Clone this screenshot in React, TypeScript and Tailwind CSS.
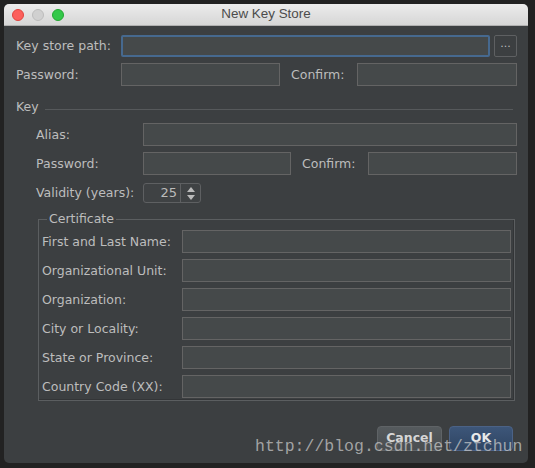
import React from 'react'

const labelCls = 'shrink-0 text-[12.5px] leading-[16px] text-[#bdbdbd]'
const fieldCls = 'h-[23px] border border-[#646464] bg-[#45494a]'

function Field({ className = '' }: { className?: string }) {
  return <div className={`${fieldCls} ${className}`} />
}

function Row({ children, className = '' }: { children: React.ReactNode; className?: string }) {
  return <div className={`flex items-center ${className}`}>{children}</div>
}

const certRows = [
  'First and Last Name:',
  'Organizational Unit:',
  'Organization:',
  'City or Locality:',
  'State or Province:',
  'Country Code (XX):',
]

export default function App() {
  return (
    <div
      className="relative h-[468px] w-[535px] overflow-hidden bg-[#222222] p-[4px] pr-[7px] pb-[5px]"
      style={{ fontFamily: '"DejaVu Sans", "Liberation Sans", sans-serif' }}
    >
      <div className="flex h-full flex-col overflow-hidden rounded-[5px] bg-[#3c3f41]">
        {/* title bar */}
        <div className="relative flex h-[22px] shrink-0 items-center border-b border-[#b0b0b0] bg-gradient-to-b from-[#ececec] to-[#d6d6d6] pl-[8px]">
          <div className="flex gap-[8px]">
            <span className="h-[12px] w-[12px] rounded-full border border-[#e0443e] bg-[#fc605c]" />
            <span className="h-[12px] w-[12px] rounded-full border border-[#bcbcbc] bg-[#d0d0d0]" />
            <span className="h-[12px] w-[12px] rounded-full border border-[#24a732] bg-[#34c84a]" />
          </div>
          <div
            className="absolute inset-0 flex items-center justify-center text-[13.4px] text-[#4c4c4c]"
            style={{ fontFamily: '"Liberation Sans", Arial, sans-serif' }}
          >
            New Key Store
          </div>
        </div>

        <div className="flex flex-1 flex-col pl-[12px] pr-[11px]">
          <Row className="mt-[9px]">
            <span className={`${labelCls} w-[105px]`}>Key store path:</span>
            <div className="h-[22px] flex-1 rounded-[2px] border-2 border-[#46698f] bg-[#45494a]" />
            <div className="ml-[4px] flex h-[22px] w-[23px] items-center justify-center rounded-[2px] border border-[#5e6062] pb-[4px] text-[11px] text-[#bbbbbb]">
              ...
            </div>
          </Row>
          <Row className="mt-[6px]">
            <span className={`${labelCls} w-[105px]`}>Password:</span>
            <Field className="w-[159px]" />
            <span className={`${labelCls} ml-[11px] w-[66px]`}>Confirm:</span>
            <Field className="flex-1" />
          </Row>

          {/* Key section */}
          <div className="mt-[13px] flex h-[16px]">
            <span className={labelCls}>Key</span>
            <div className="ml-[6px] mr-[4px] mt-[10px] h-px flex-1 bg-[#56595b]" />
          </div>

          <div className="flex flex-col pl-[20px]">
            <Row className="mt-[8px]">
              <span className={`${labelCls} w-[107px]`}>Alias:</span>
              <Field className="flex-1" />
            </Row>
            <Row className="mt-[6px]">
              <span className={`${labelCls} w-[107px]`}>Password:</span>
              <Field className="w-[148px]" />
              <span className={`${labelCls} ml-[11px] w-[66px]`}>Confirm:</span>
              <Field className="flex-1" />
            </Row>
            <Row className="mt-[8px]">
              <span className={`${labelCls} w-[107px]`}>Validity (years):</span>
              <div className="flex h-[20px] w-[58px] items-stretch rounded-[3px] border border-[#5e6062] bg-[#3f4244]">
                <span className="flex flex-1 items-center justify-end pr-[3px] text-[13px] text-[#bbbbbb]">25</span>
                <div className="flex w-[20px] flex-col items-center justify-center gap-[3px] border-l border-[#5e6062]">
                  <svg width="8" height="5" viewBox="0 0 8 5">
                    <path d="M0 5 L4 0 L8 5 Z" fill="#bbbbbb" />
                  </svg>
                  <svg width="8" height="5" viewBox="0 0 8 5">
                    <path d="M0 0 L4 5 L8 0 Z" fill="#bbbbbb" />
                  </svg>
                </div>
              </div>
            </Row>

            <fieldset className="mt-[8px] ml-[2px] mr-[2px] border border-[#5b5e60] px-[3px] pb-[2px] pt-[3px] shadow-[inset_-1px_-1px_0_#333537]">
              <legend className="ml-[5px] px-[2px] text-[12.5px] leading-[16px] text-[#bdbdbd]">Certificate</legend>
              <div className="flex flex-col gap-[6px]">
                {certRows.map((l) => (
                  <Row key={l}>
                    <span className={`${labelCls} w-[140px]`}>{l}</span>
                    <Field className="flex-1" />
                  </Row>
                ))}
              </div>
            </fieldset>
          </div>

          {/* buttons */}
          <div className="mt-[25px] flex justify-end gap-[7px] pr-[4px]">
            <button className="h-[25px] w-[65px] rounded-[4px] border border-[#5f6366] bg-gradient-to-b from-[#555a5d] to-[#4a4e51] text-[12.5px] font-bold text-[#d6d6d6]">
              Cancel
            </button>
            <button className="h-[25px] w-[64px] rounded-[4px] border border-[#4b6286] bg-gradient-to-b from-[#3d5679] to-[#2f4563] text-[12.5px] font-bold text-[#e8e8e8]">
              OK
            </button>
          </div>
        </div>
      </div>

      {/* watermark */}
      <div
        className="pointer-events-none absolute left-[255px] top-[437px] text-[16.5px] leading-[20px] text-[#d0d0d0]/70"
        style={{ fontFamily: '"Liberation Mono", "Courier New", monospace' }}
      >
        http://blog.csdn.net/ztchun
      </div>
    </div>
  )
}
